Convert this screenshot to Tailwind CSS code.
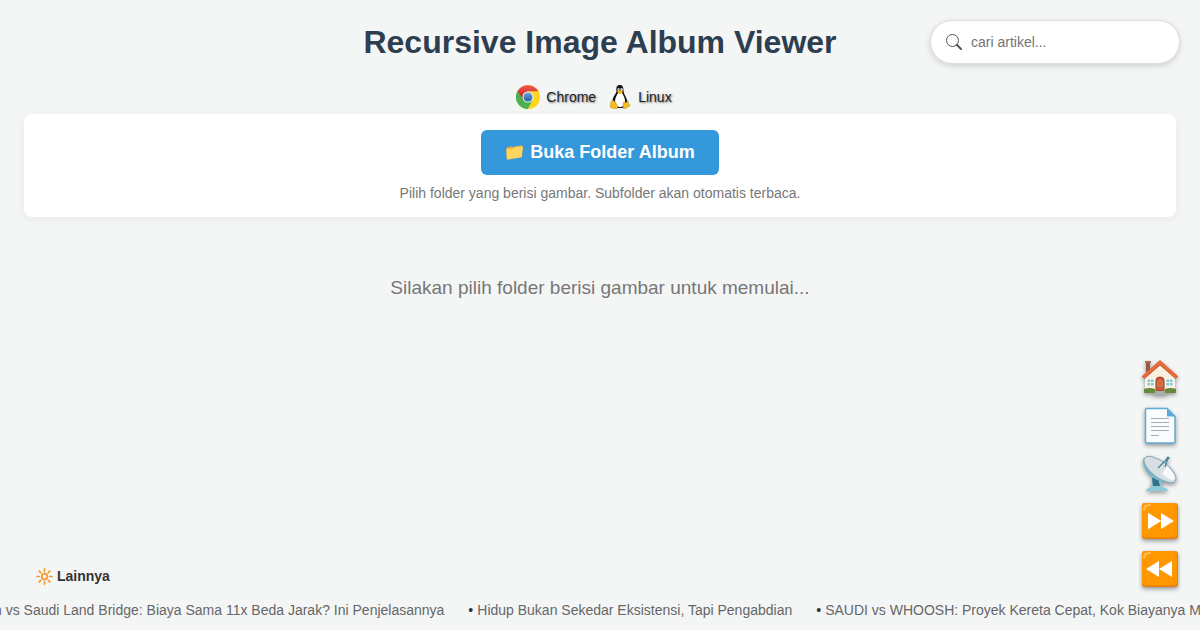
<!DOCTYPE html>
<html lang="id">
<head>
<meta charset="utf-8">
<meta name="viewport" content="width=device-width, initial-scale=1">
<title>Recursive Image Album Viewer</title>
<script src="https://cdn.jsdelivr.net/npm/@tailwindcss/browser@4"></script>
</head>
<body class="flex min-h-screen flex-col overflow-x-hidden bg-[#f4f6f6] font-['Liberation_Sans',Arial,sans-serif] text-[#333]">

<header class="px-6 pt-5 pb-1 text-center">
  <h1 class="text-[32px] leading-11 font-bold text-[#2c3e50]">Recursive Image Album Viewer</h1>
  <div class="mt-5 flex h-[26px] items-center justify-center gap-3 pr-3 text-sm text-[#222] [text-shadow:1px_1px_2px_rgba(0,0,0,0.5)]">
    <span class="flex items-center gap-1.5">
      <svg class="size-6" viewBox="0 0 48 48" aria-hidden="true">
        <defs>
          <linearGradient id="cr" x1="0" y1="0" x2="0" y2="1"><stop offset="0" stop-color="#f05a50"/><stop offset="1" stop-color="#c51f1f"/></linearGradient>
          <linearGradient id="cb" x1="0" y1="0" x2="0" y2="1"><stop offset="0" stop-color="#6fa6dc"/><stop offset="1" stop-color="#1f5fa5"/></linearGradient>
        </defs>
        <circle cx="24" cy="24" r="24" fill="#ffd51e"/>
        <path d="M24 24 L3.2 12 A24 24 0 0 0 24 48 L34 30Z" fill="#4bb04f"/>
        <path d="M3.2 12 A24 24 0 0 1 44.8 13 L24 13 A11 11 0 0 0 14 28Z" fill="url(#cr)"/>
        <path d="M44.8 13 A24 24 0 0 1 24 48 L34 29 A11 11 0 0 0 24 13Z" fill="#ffd51e"/>
        <circle cx="24" cy="24" r="11" fill="#f4f4f4"/>
        <circle cx="24" cy="24" r="9" fill="url(#cb)"/>
      </svg>
      Chrome
    </span>
    <span class="flex items-center gap-1.5">
      <svg class="size-6" viewBox="0 0 48 48" aria-hidden="true">
        <path d="M24 0C17 0 16 5 17 12C17 17 10 22 9 31C8 38 12 45 17 46H32C38 44 40 36 38 30C36 23 31 18 31 11C31 4 29 0 24 0Z" fill="#111"/>
        <path d="M21 15C18 19 14 26 14 32C15 39 18 44 25 44C32 44 34 38 34 32C34 25 30 20 28 15Z" fill="#fff"/>
        <ellipse cx="21" cy="9" rx="2.2" ry="3" fill="#fff"/><ellipse cx="27" cy="9" rx="2.5" ry="3" fill="#fff"/>
        <circle cx="21.6" cy="9.5" r="1" fill="#111"/><circle cx="26.4" cy="9.5" r="1" fill="#111"/>
        <path d="M18 13Q24 9 30 13Q28 18 24 18Q20 17 18 13Z" fill="#f2b51c"/>
        <path d="M10 31L5 34Q7 39 4 43Q4 46 9 46L15 48Q20 48 20 43Q17 38 14 34Q12 31 10 31Z" fill="#f5bd1d" stroke="#a87308" stroke-width=".8"/>
        <path d="M31 34Q30 41 30 46Q33 49 37 46Q40 43 44 42Q45 40 41 37L40 32Q35 37 31 34Z" fill="#f5bd1d" stroke="#a87308" stroke-width=".8"/>
      </svg>
      Linux
    </span>
  </div>
</header>

<form role="search" class="absolute top-5 right-5 flex h-11 w-[250px] items-center gap-[9px] rounded-full border border-[#ddd] bg-white px-[15px] shadow-[0_2px_6px_rgba(0,0,0,0.15)]">
  <svg class="size-4 shrink-0 text-[#555]" viewBox="0 0 16 16" fill="none" stroke="currentColor" aria-hidden="true">
    <circle cx="6.5" cy="6.5" r="6"/><path d="M10.8 10.8L15 15" stroke-width="2" stroke-linecap="round"/>
  </svg>
  <input type="search" aria-label="Cari artikel" placeholder="cari artikel..." class="w-full min-w-0 bg-transparent text-sm outline-none placeholder:text-[#757575]">
</form>

<main class="px-6">
  <section class="flex flex-col items-center rounded-lg bg-white px-4 pt-4 pb-[13px] shadow-[0_2px_8px_rgba(0,0,0,0.06)]">
    <button type="button" class="flex h-[45px] items-center gap-1.5 rounded-md bg-[#3498db] px-6 pb-0.5 text-lg font-bold text-white">
      <svg class="h-[18px] w-[19px]" viewBox="0 0 42 40" aria-hidden="true">
        <path d="M3 12L5 9L14 7L17 9L36 5Q38 5 38 8V30L4 36Z" fill="#e9a43a"/>
        <path d="M3 15Q3 13 5 13L18 12L21 9L38 7Q40 7 40 9L37 30Q37 32 35 32L6 37Q4 37 4 35Z" fill="#ffd45e"/>
      </svg>
      Buka Folder Album
    </button>
    <p class="mt-[7px] text-sm leading-[22px] text-[#777]">Pilih folder yang berisi gambar. Subfolder akan otomatis terbaca.</p>
  </section>
  <p class="pt-[57px] text-center text-[19px] leading-7 text-[#777]">Silakan pilih folder berisi gambar untuk memulai...</p>
</main>

<nav aria-label="Navigasi cepat" class="absolute right-5 bottom-[41px] flex flex-col gap-2 [&_svg]:size-10 [&_svg]:drop-shadow-[0_2px_2px_rgba(0,0,0,0.4)]">
  <a href="#home" aria-label="Beranda"><svg viewBox="0 0 40 40">
    <path d="M6 5H10V17H6Z" fill="#985744"/><path d="M5 4H11V6H5Z" fill="#b06a55"/>
    <path d="M5 19L20 6L35 19V34H5Z" fill="#fbf0df"/>
    <path d="M20 3L38 19L35.500 21.500L20 8L4.500 21.500L2 19Z" fill="#e66a3d"/>
    <path d="M2 19L4.500 21.500L20 8L35.500 21.500L38 19" fill="none" stroke="#bb4828" stroke-width=".8"/>
    <g fill="#87c5cc" stroke="#fff" stroke-width=".8"><path d="M7 22h7v7H7zM26 22h7v7h-7z"/><path d="M10.500 22v7M7 25.500h7M29.500 22v7M26 25.500h7"/></g>
    <path d="M16 34V23Q16 20 20 20Q24 20 24 23V34Z" fill="#c85d39" stroke="#9c4027"/><path d="M18 24h4v5h-4z" fill="none" stroke="#e08a60"/>
    <path d="M4 32Q9 30 15 32V36H4ZM25 32Q31 30 36 32V36H25Z" fill="#638b3b"/><path d="M15 34H25V36H27V38H13V36H15Z" fill="#a7adad"/>
  </svg></a>
  <a href="#page" aria-label="Halaman"><svg viewBox="0 0 40 40">
    <path d="M6 3.500H27L35 11.500V37Q35 38 33.500 38H6.500Q5.500 38 5.500 36.500V4.500Z" fill="#fafcfd" stroke="#64aad6" stroke-width="1.500"/>
    <path d="M27 3L35.500 11.500H27Z" fill="#5ba9dc"/>
    <path d="M11 13.500H29M11 17.500H29M11 21.500H29M11 25.500H29M11 30.500H19" stroke="#a1b0b8"/>
  </svg></a>
  <a href="#feed" aria-label="Feed"><svg viewBox="0 0 40 40">
    <path d="M13 22L11 34Q6 36 6 38H28Q28 35 22 34L21 27Z" fill="#8cc9db"/><path d="M12 25H18L20 33H13Z" fill="#376f85"/>
    <path d="M4 5C0 9 7 23 17 27C25 30 35 31 35 27Z" fill="#73b6cc"/>
    <ellipse cx="20" cy="16.500" rx="19" ry="8" transform="rotate(37 20 16.500)" fill="#d7dfe3" stroke="#8baeba"/>
    <path d="M22 21L29 26L34 27Q36 24 31 17L27 13Z" fill="#f7f9fa"/>
    <path d="M18 15L28 5M25 14L28 5" stroke="#487e93" stroke-width="1.200"/><circle cx="28" cy="5" r="1.500" fill="#487e93"/>
  </svg></a>
  <a href="#next" aria-label="Maju"><svg viewBox="0 0 40 40">
    <rect x="2" y="2" width="36" height="36" rx="3" fill="#e57d0b"/><rect x="2" y="2" width="35" height="34.500" rx="3" fill="#ff9800"/>
    <path d="M4 9Q4 4 10 4" fill="none" stroke="#ffc05c" stroke-width="2" stroke-linecap="round"/>
    <path d="M8 12L21 20V12L34 20L21 28V20L8 28Z" fill="#fff"/><path d="M8 12L21 20L8 28Z" fill="#fff"/>
  </svg></a>
  <a href="#prev" aria-label="Mundur"><svg viewBox="0 0 40 40">
    <rect x="2" y="2" width="36" height="36" rx="3" fill="#e57d0b"/><rect x="2" y="2" width="35" height="34.500" rx="3" fill="#ff9800"/>
    <path d="M4 9Q4 4 10 4" fill="none" stroke="#ffc05c" stroke-width="2" stroke-linecap="round"/>
    <path d="M32 12L19 20V12L6 20L19 28V20L32 28Z" fill="#fff"/>
  </svg></a>
</nav>

<footer class="mt-auto pb-2.5">
  <h2 class="flex items-center gap-1 px-9 text-sm font-bold">
    <svg class="size-[17px]" viewBox="0 0 18 18" fill="none" stroke="#f39a2b" stroke-width="1.800" stroke-linecap="round" aria-hidden="true">
      <circle cx="9" cy="9" r="3"/><path d="M9 1V3.500M9 14.500V17M1 9H3.500M14.500 9H17M3.400 3.400L5 5M13 13L14.600 14.600M3.400 14.600L5 13M13 5L14.600 3.400"/>
    </svg>
    Lainnya
  </h2>
  <div class="mt-3.5 overflow-hidden">
    <ul class="-ml-1.5 flex gap-6 text-sm leading-5 whitespace-nowrap">
      <li><a href="#a1" class="text-[#666]">n vs Saudi Land Bridge: Biaya Sama 11x Beda Jarak? Ini Penjelasannya</a></li>
      <li class="flex gap-1"><span>•</span><a href="#a2" class="text-[#666]">Hidup Bukan Sekedar Eksistensi, Tapi Pengabdian</a></li>
      <li class="flex gap-1"><span>•</span><a href="#a3" class="text-[#666]">SAUDI vs WHOOSH: Proyek Kereta Cepat, Kok Biayanya Miring?</a></li>
    </ul>
  </div>
</footer>
</body>
</html>
